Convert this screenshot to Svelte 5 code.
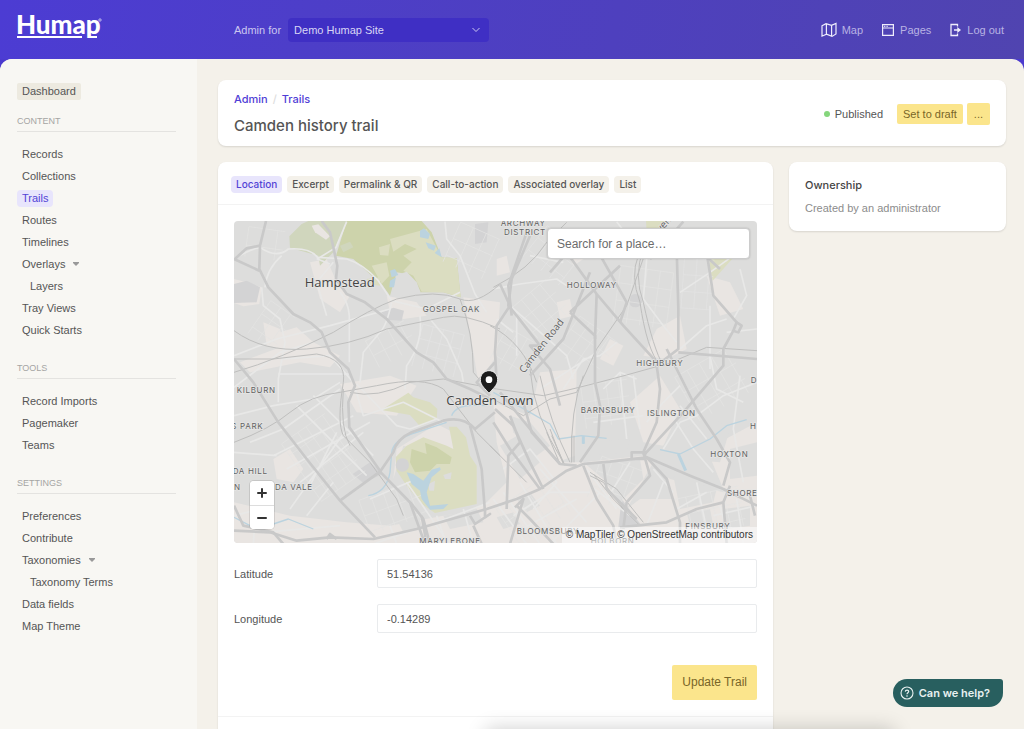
<script>
	const sections = [
		{
			title: 'Content',
			items: [
				{ label: 'Records' },
				{ label: 'Collections' },
				{ label: 'Trails', active: true },
				{ label: 'Routes' },
				{ label: 'Timelines' },
				{ label: 'Overlays', caret: true },
				{ label: 'Layers', child: true },
				{ label: 'Tray Views' },
				{ label: 'Quick Starts' }
			]
		},
		{
			title: 'Tools',
			items: [{ label: 'Record Imports' }, { label: 'Pagemaker' }, { label: 'Teams' }]
		},
		{
			title: 'Settings',
			items: [
				{ label: 'Preferences' },
				{ label: 'Contribute' },
				{ label: 'Taxonomies', caret: true },
				{ label: 'Taxonomy Terms', child: true },
				{ label: 'Data fields' },
				{ label: 'Map Theme' }
			]
		}
	];

	const tabs = ['Location', 'Excerpt', 'Permalink & QR', 'Call-to-action', 'Associated overlay', 'List'];

	let tab = $state('Location');
	let latitude = $state('51.54136');
	let longitude = $state('-0.14289');

	// Three map units to one CSS pixel at the default size
	const blocks = [
		'M12 190 50 200 95 215 88 265 40 272 12 262Z',
		'M150 350 200 335 250 380 330 420 300 455 210 440 60 470 30 440 150 395Z',
		'M240 140 290 130 320 200 360 240 330 290 270 250Z',
		'M240 30 275 15 300 60 270 90Z',
		'M100 320 150 340 165 400 110 390Z',
		'M470 240 560 260 590 300 520 310 480 290Z',
		'M700 245 810 260 800 420 745 500 720 350Z',
		'M330 505 480 480 560 510 500 600 380 590Z',
		'M130 730 180 700 220 760 190 800 140 790Z',
		'M12 860 180 900 350 920 480 930 640 900 760 880 780 985 12 985Z',
		'M500 700 620 625 670 650 690 780 560 700 520 690 490 790Z',
		'M1000 80 1060 60 1075 120 1030 150Z',
		'M1130 80 1190 60 1200 110 1150 130Z',
		'M980 260 1020 250 1030 300 990 310Z',
		'M800 130 830 120 840 170 800 180Z',
		'M1280 340 1350 300 1370 400 1310 430 1240 420Z',
		'M1430 180 1500 200 1540 280 1470 300Z',
		'M1200 560 1290 480 1350 580 1300 690 1240 680Z',
		'M930 470 1040 460 1035 720 980 740 900 600Z',
		'M1140 370 1180 390 1150 450 1110 430Z',
		'M790 560 900 600 1000 740 1060 740 1240 720 1320 790 1480 830 1581 800 1581 985 780 985 700 900 770 860 830 800 800 680Z',
		'M1430 700 1581 620 1581 830 1480 820Z'
	];

	const fabric = [
		'M810 690 880 650 930 740 870 790Z',
		'M840 600 900 620 960 690 920 720 850 650Z',
		'M1060 740 1230 730 1240 790 1170 860 1120 790Z',
		'M1270 740 1310 770 1330 850 1230 850 1190 880Z',
		'M1330 780 1460 820 1450 860 1350 880Z',
		'M1340 650 1440 600 1500 640 1470 740 1350 730 1290 700Z',
		'M1500 700 1581 680 1581 780 1500 790Z',
		'M1370 890 1440 880 1450 930 1380 930Z',
		'M1480 880 1560 870 1560 930 1490 940Z',
		'M1060 680 1200 670 1190 710 1070 720Z',
		'M860 850 900 830 930 870 890 890Z',
		'M500 910 560 890 580 940 520 950Z',
		'M640 900 740 880 760 920 660 940Z',
		'M800 905 850 890 870 925 820 940Z'
	];

	const darkBlocks = [
		'M368 775 420 740 458 775 400 802Z',
		'M455 290 490 276 522 285 515 315 470 312Z',
		'M12 205 50 195 90 215 80 260 12 262Z',
		'M735 25 775 20 770 80 735 85Z',
		'M1165 935 1175 850 1235 930Z'
	];

	const minor = [
		'M12 130 Q60 100 90 95 Q140 130 175 100 Q240 95 262 125 L350 130 Q400 145 445 195 L485 255 590 280 690 230',
		'M350 18 318 95 262 130 300 145',
		'M645 18 650 70 690 120 735 235 770 290',
		'M95 215 100 270 150 310 165 380 145 490 145 560',
		'M155 120 Q110 160 105 215',
		'M310 140 260 200 290 300 M330 230 Q355 260 358 300 V440',
		'M485 260 Q470 330 450 350 L400 410 390 500',
		'M570 300 Q580 380 530 450 L525 520 M600 310 650 370 695 470 700 500',
		'M12 420 140 370 300 330 480 280',
		'M12 515 150 410 250 380 M145 475 H360',
		'M160 430 300 420 370 500 400 600 520 560 640 620',
		'M12 600 130 570 250 550 330 500',
		'M60 680 160 640 330 520 M130 720 370 600 M170 760 420 620 M210 800 400 650 M12 710 140 720',
		'M200 570 410 780 M250 540 430 720 M240 810 320 650 M180 880 350 640 M230 900 310 800',
		'M380 505 500 630 540 640 620 610 M420 850 560 790',
		'M790 220 870 205 980 190 1010 210 M840 270 1010 420 1030 490',
		'M860 290 860 420 M800 310 850 350 M900 120 1000 140',
		'M1000 520 1060 430 1110 420 1160 380 M930 520 1100 410',
		'M1160 18 1200 70 1290 110 1350 110 M1250 130 1240 250 1300 330 1340 380',
		'M1350 230 1440 170 1510 120 1540 60 M1440 270 1440 460 M1530 160 1550 240 1510 310',
		'M1350 400 1430 330 1490 310 M1490 350 1581 340 M1440 420 1460 520 1540 560',
		'M1120 520 1170 470 1220 490 M1170 470 1190 670 M1210 480 1230 640 M1090 620 1240 600',
		'M1250 620 1300 560 1350 510 M1300 700 1350 620 1400 600 1480 540 1581 500',
		'M1320 590 1390 700 1450 770 M1350 570 1430 670 M1530 480 1510 640 1540 800',
		'M820 760 900 700 980 800 910 880 M850 900 960 830 1080 830 M930 760 1070 920 M960 985 1110 830',
		'M790 850 890 985 M820 830 930 985 M870 800 980 985 M840 960 1040 850',
		'M1130 850 1200 740 M1070 760 1160 880 M1080 810 1200 900 M1300 800 1250 930 M1270 760 1330 830',
		'M1340 880 1430 830 M1400 800 1430 940 M1470 870 1500 985 M1520 850 1540 985 M1450 900 1581 870',
		'M430 985 620 920 780 860 M480 930 500 985 M620 900 650 985 M700 880 730 985 M530 800 640 960',
		'M12 900 90 880 M80 830 70 985 M100 950 330 930'
	];

	// Regular terraces of side streets: origin, size, bearing and spacing
	const grids = [
		{ x: 200, y: 620, w: 160, h: 210, a: -35, s: 30 },
		{ x: 80, y: 270, w: 90, h: 120, a: 35, s: 36 },
		{ x: 420, y: 340, w: 130, h: 90, a: -28, s: 38 },
		{ x: 560, y: 340, w: 130, h: 130, a: 15, s: 32 },
		{ x: 900, y: 60, w: 140, h: 120, a: 38, s: 34 },
		{ x: 870, y: 220, w: 130, h: 120, a: -40, s: 36 },
		{ x: 1160, y: 160, w: 160, h: 170, a: 8, s: 40 },
		{ x: 1360, y: 80, w: 90, h: 200, a: 4, s: 38 },
		{ x: 1060, y: 500, w: 140, h: 130, a: -8, s: 38 },
		{ x: 1000, y: 330, w: 140, h: 130, a: 35, s: 36 },
		{ x: 1360, y: 430, w: 180, h: 150, a: -30, s: 42 },
		{ x: 1090, y: 740, w: 130, h: 130, a: 20, s: 34 },
		{ x: 820, y: 820, w: 180, h: 130, a: -34, s: 36 },
		{ x: 1340, y: 830, w: 200, h: 120, a: -12, s: 38 },
		{ x: 400, y: 820, w: 180, h: 110, a: -20, s: 38 },
		{ x: 800, y: 350, w: 90, h: 110, a: 30, s: 34 },
		{ x: 50, y: 40, w: 110, h: 90, a: 8, s: 44 },
		{ x: 660, y: 40, w: 130, h: 130, a: 24, s: 42 }
	];

	function gridPath({ w, h, s }) {
		let d = '';
		for (let i = 0; i <= w; i += s) d += `M${i} 0V${h}`;
		for (let j = 0; j <= h; j += s + 12) d += `M0 ${j}H${w}`;
		return d;
	}

	const major = [
		'M108 16 90 90 88 160 115 215 190 295 240 320 275 350 300 410 355 460 375 510 355 560 358 635 450 765',
		'M12 132 50 98 90 90 M12 130 88 165',
		'M275 16 300 50 322 150 318 190 350 235 405 260 470 310 560 410 610 440 650 490 720 520 780 550',
		'M12 430 70 500 145 620 230 730 330 855 435 965',
		'M330 855 450 768 490 710 Q500 670 545 650 L640 615 Q700 600 735 640 L795 590',
		'M450 768 545 865 580 910 600 985',
		'M540 860 585 985 M575 900 590 985',
		'M12 945 120 950 200 975 300 965 430 970 560 940 770 880 860 850 930 820 1010 765 1060 745 1140 738 1250 725 1380 780 1480 820 1581 870',
		'M290 970 300 955 320 970 M12 870 40 930 130 950 160 985',
		'M720 630 755 760 765 890 M765 880 V905 L780 895 735 925 720 900',
		'M730 930 755 985 M780 540 740 500 795 440',
		'M900 60 845 190 835 270 860 300 930 390 900 390 960 460 990 570',
		'M810 205 840 270 800 330 795 410 800 500',
		'M845 300 835 210 890 50',
		'M810 530 900 640 990 745 1040 750',
		'M795 580 850 630 900 740 940 820 M840 600 870 680 835 720 830 880',
		'M790 620 840 700 930 820 M880 560 905 650 990 745',
		'M900 480 1000 370 1080 170 M1020 290 1170 150',
		'M1010 110 1100 235 1180 330 1290 450',
		'M1310 400 1400 580 1460 670 1500 740 1480 810',
		'M1020 290 1095 360 1095 500 1110 570 1105 660 1050 740',
		'M1100 100 1190 260 1170 320',
		'M1100 235 1095 370',
		'M1340 100 1345 280 1345 400 1280 450 1290 520 1280 620 1240 710 1260 780 1190 860 1180 940',
		'M1430 110 1450 240 1520 320 1510 345 1480 400 1480 450 1360 590 1240 720',
		'M1520 320 1535 330 1525 350 1508 345',
		'M1345 410 1581 430',
		'M1060 750 1100 850 1150 930 1160 985 M1250 725 1310 790 1350 920 1350 985',
		'M1170 935 1310 920 1400 880 1480 860 1500 810 M1480 860 1490 985 M1560 840 1575 900',
		'M1120 745 1130 820 1220 910 M1205 710 H1245 V730 H1205Z',
		'M860 870 900 910 970 985 M855 875 880 850 840 985',
		'M1260 130 1360 18 M1360 60 1470 160 M980 120 960 50 M1030 90 960 170'
	];

	const rails = [
		'M12 345 Q100 410 230 400 T470 340 L640 305 Q700 290 810 340',
		'M12 470 Q150 430 310 350 Q420 280 500 250 Q620 220 690 250 Q740 270 810 205',
		'M12 430 130 430 260 415 Q350 430 340 500 Q320 620 340 660 L420 740 500 850 520 900',
		'M690 250 Q730 350 730 470 L780 530',
		'M12 680 Q120 640 180 590 T330 530 L440 510 Q580 480 640 520 L740 650 810 720',
		'M340 520 Q330 640 360 690 M360 530 Q440 550 540 500 L640 490 800 520 940 540 Q1080 510 1290 450',
		'M900 460 Q910 600 1000 740 M930 480 Q960 620 1020 740 M1060 480 Q1020 580 1025 740',
		'M780 545 880 600 960 550 1040 530 1100 400 1190 270 1250 100',
		'M1240 100 Q1210 180 1240 260 Q1270 400 1300 450 L1430 395 1581 405',
		'M1225 120 Q1200 180 1230 260 Q1250 400 1290 450',
		'M780 330 Q880 380 920 500 M790 215 Q900 160 950 80 L1010 20',
		'M780 690 830 740 890 800 M1080 770 1160 820 1240 920',
		'M950 650 990 745 M960 640 1000 745 M965 660 1005 750 M1025 660 V740 M1032 660 V740',
		'M1080 780 1120 800 1180 880 M1090 775 1150 850 1230 930'
	];

	const labels = [
		['ARCHWAY', 812, 31],
		['DISTRICT', 822, 59],
		['GOSPEL OAK', 578, 290],
		['HOLLOWAY', 1010, 217],
		['HIGHBURY', 1219, 451],
		['KILBURN', 20, 532],
		['BARNSBURY', 1052, 592],
		['ISLINGTON', 1251, 602],
		['S PARK', 4, 639],
		['HOXTON', 1441, 725],
		['DA HILL', 8, 776],
		['N', 12, 824],
		['DA VALE', 135, 824],
		['SHORE', 1491, 842],
		['FINSBURY', 1366, 940],
		['BLOOMSBURY', 860, 956],
		['MARYLEBONE', 568, 985],
		['HOLBORN', 1082, 985],
		['D', 1562, 502],
		['H', 1560, 639]
	];
</script>

<div class="app">
	<header class="topbar">
		<a class="brand" href="#home" aria-label="Humap">
			<svg width="92" height="28" viewBox="0 0 92 28">
				<text class="wordmark" x="-1" y="20">Humap</text>
				<path d="M0 22H65V24H0Z M73 22H80V24H72Z" fill="#fff" />
				<circle cx="83" cy="6" r="1.2" fill="none" stroke="#fff" stroke-width=".6" />
			</svg>
		</a>
		<div class="site">
			<label for="site">Admin for</label>
			<div class="select">
				<select id="site">
					<option>Demo Humap Site</option>
				</select>
				<svg class="chevron" width="8" height="6" viewBox="0 0 8 6">
					<path d="M.5 1 4 4.5 7.5 1" fill="none" stroke="currentColor" />
				</svg>
			</div>
		</div>
		<nav class="links" aria-label="Site">
			<a href="#map">
				<svg width="16" height="16" viewBox="0 0 16 16">
					<path
						d="M1 3.8 5 1.6 10.5 3.4 15 1.4V12L11 14.4 5.5 12.2 1 14.2Z M5.4 2V12 M10.6 3.6V14"
						fill="none"
						stroke="currentColor"
						stroke-width="1.2"
					/>
				</svg>
				Map
			</a>
			<a href="#pages">
				<svg width="14" height="14" viewBox="0 0 14 14">
					<path d="M1.6 1.6H12.4V12.4H1.6Z M1.6 5H12.4" fill="none" stroke="currentColor" stroke-width="1.2" />
					<path d="M3 3.3H7" stroke="currentColor" stroke-dasharray="1 .6" />
				</svg>
				Pages
			</a>
			<a href="#logout">
				<svg width="13" height="14" viewBox="0 0 13 14">
					<path d="M8.5 3.5V1.5H2V12.5H8.5V10.5" fill="none" stroke="currentColor" stroke-width="1.3" />
					<path d="M5 6.3H8.3V4L12 7 8.3 10V7.7H5Z" fill="currentColor" />
				</svg>
				Log out
			</a>
		</nav>
	</header>

	<div class="body">
		<aside class="sidebar">
			<a class="item dashboard" href="#dashboard">Dashboard</a>
			{#each sections as section (section.title)}
				<nav aria-label={section.title}>
					<h2>{section.title}</h2>
					<ul>
						{#each section.items as item (item.label)}
							<li class:child={item.child}>
								<a class="item" class:active={item.active} href="#{item.label}">{item.label}</a>
								{#if item.caret}
									<svg class="caret" width="6" height="4" viewBox="0 0 6 4">
										<path d="M0 0H6V1L3 4 0 1Z" fill="currentColor" />
									</svg>
								{/if}
							</li>
						{/each}
					</ul>
				</nav>
			{/each}
		</aside>

		<main>
			<section class="card heading">
				<div>
					<div class="crumbs">
						<a href="#admin">Admin</a><span>/</span><a href="#trails">Trails</a>
					</div>
					<h1>Camden history trail</h1>
				</div>
				<div class="actions">
					<span class="status">Published</span>
					<button class="yellow" type="button">Set to draft</button>
					<button class="yellow more" type="button" aria-label="More actions">...</button>
				</div>
			</section>

			<div class="columns">
				<section class="card editor">
					<div class="tabs">
						{#each tabs as name (name)}
							<button type="button" class:active={tab === name} onclick={() => (tab = name)}>{name}</button>
						{/each}
					</div>

					<form onsubmit={(e) => e.preventDefault()}>
						<div class="map">
							<svg class="tiles" viewBox="12 16 1569 966" preserveAspectRatio="xMidYMid slice" role="img" aria-label="Map of Camden">
								<rect class="land" x="0" y="0" width="1600" height="1000" />
								{#each blocks as d (d)}<path class="block" {d} />{/each}
								{#each fabric as d (d)}<path class="land" {d} />{/each}
								{#each darkBlocks as d (d)}<path class="dark-block" {d} />{/each}
								<circle class="dark-block" cx="1216" cy="255" r="20" />

								<path class="wood" d="M215 25 235 16H350L310 110 295 125 270 150 265 120 180 96 178 62Z" />
								<path class="block" d="M245 30 265 26 300 62 288 72 255 50Z" />
								<path class="heath" d="M350 16H575L605 50 635 125 680 128 692 245 640 230 570 230 530 175 500 170 480 240 455 205 430 185 370 130 318 120Z" />
								<path class="park" d="M480 70 590 40 635 125 680 128 692 245 640 230 575 228 550 180 520 165 545 140 520 120 560 100 525 85 490 108Z" />
								<path class="park" d="M447 95 480 85 475 120 450 118Z M425 150 470 140 478 180 455 205Z M410 190 450 185 450 210 415 205Z" />
								<path class="land" d="M485 240 500 178 530 168 560 200 572 230 520 238Z" />
								<path class="wood" d="M330 90 360 78 370 95 340 110Z" />
								<path class="park" d="M454 583 535 531 550 545 600 560 622 580 620 610 570 632 540 598Z" />
								<path class="park" d="M497 725 530 690 580 665 650 690 670 700 657 633H680L708 665 720 720 740 750V865L615 892 575 865 530 810 500 765Z" />
								<path class="heath" d="M585 681 620 695 665 725 660 745 620 745 600 765 555 770 540 740 545 700 590 715Z" />
								<circle class="dark-block" cx="517" cy="748" r="20" />
								<path class="park" d="M1248 16H1310L1290 50H1250Z M1432 120H1515L1448 195Z" />
								<path class="land" d="M640 778 665 770 662 790 645 790Z M595 805 615 795 612 825 598 825Z" />

								{#each grids as g (`${g.x}-${g.y}`)}
									<path class="street" d={gridPath(g)} transform="translate({g.x} {g.y}) rotate({g.a} {g.w / 2} {g.h / 2})" />
								{/each}
								{#each minor as d (d)}<path class="minor" {d} />{/each}

								<path class="water" d="M570 45 582 38 600 55 595 70 570 65Z M587 80 618 90 612 105 595 98Z M614 112 628 98 635 125Z M480 165 495 160 505 178 485 185Z M480 195 498 185 492 215 478 215Z" />
								<path class="water" d="M530 770 550 775 580 795 605 762 630 755 632 762 605 785 590 830 600 870 655 865 640 880 600 882 575 850 570 825 545 805Z" />
								<path class="canal" d="M12 905 60 930 130 925 175 910 250 940 M415 840Q470 830 480 770 L485 710Q490 670 560 650L650 620" />
								<path class="canal" d="M665 600Q680 560 770 570 M790 530 900 590 960 625 985 670 1055 660 1130 668 M1060 660V685 M1290 702 1350 715 1440 670 1490 630 1550 612" />
								<path class="basin" d="M1345 715 1367 765 M1060 662V684" />

								{#each rails as d (d)}<path class="rail" {d} />{/each}
								{#each major as d (d)}<path class="major" {d} />{/each}

								{#each labels as [name, x, y] (name)}
									<text class="district" {x} {y}>{name}</text>
								{/each}
								<text class="town" x="224" y="215">Hampstead</text>
								<text class="town" x="649" y="567">Camden Town</text>
								<text class="road" transform="translate(882 474) rotate(-52)">Camden Road</text>
								<text class="road" transform="translate(1270 76) rotate(-48)">Seven</text>

								<path class="pin" d="M777 465C791 465 803 476 803 492C803 510 787 520 777 533C767 520 751 510 751 492C751 476 763 465 777 465Z" />
								<circle cx="777" cy="492" r="10" fill="#fff" />
							</svg>
							<input class="search" type="search" placeholder="Search for a place…" aria-label="Search for a place" />
							<div class="zoom">
								<button type="button" aria-label="Zoom in">
									<svg width="10" height="10" viewBox="0 0 10 10">
										<path d="M5 1V9M1 5H9" stroke="#333" stroke-width="2" stroke-linecap="round" />
									</svg>
								</button>
								<button type="button" aria-label="Zoom out">
									<svg width="10" height="10" viewBox="0 0 10 10">
										<path d="M1 5H9" stroke="#333" stroke-width="2" stroke-linecap="round" />
									</svg>
								</button>
							</div>
							<div class="attribution">
								<a href="#maptiler">© MapTiler</a> <a href="#osm">© OpenStreetMap contributors</a>
							</div>
						</div>

						<div class="field">
							<label for="lat">Latitude</label>
							<input id="lat" type="text" bind:value={latitude} />
						</div>
						<div class="field">
							<label for="lng">Longitude</label>
							<input id="lng" type="text" bind:value={longitude} />
						</div>
						<button class="yellow update" type="submit">Update Trail</button>
					</form>
				</section>

				<section class="card owner">
					<h3>Ownership</h3>
					<p>Created by an administrator</p>
				</section>
			</div>
		</main>
	</div>

	<div class="tray"></div>
	<button class="help" type="button">
		<svg width="14" height="14" viewBox="0 0 14 14">
			<circle cx="7" cy="7" r="6" fill="none" stroke="currentColor" stroke-width="1.1" />
			<path d="M5.3 5.6C5.4 3.5 8.7 3.6 8.7 5.5C8.7 6.7 7 6.8 7 8.2" fill="none" stroke="currentColor" stroke-width="1.2" />
			<circle cx="7" cy="10" r=".8" fill="currentColor" />
		</svg>
		Can we help?
	</button>
</div>

<style>
	:global(body) {
		margin: 0;
		background: #4b3ace;
	}

	.app {
		display: flex;
		flex-direction: column;
		height: 100vh;
		overflow: hidden;
		font-family: 'Liberation Sans', Arial, sans-serif;
		font-size: 11px;
		line-height: 16px;
		color: #555;
	}

	.app * {
		box-sizing: border-box;
	}

	a {
		color: inherit;
		text-decoration: none;
	}

	button,
	input,
	select {
		font: inherit;
		color: inherit;
		margin: 0;
	}

	button {
		border: 0;
		cursor: pointer;
	}

	svg {
		flex: none;
	}

	.topbar {
		display: flex;
		align-items: center;
		flex: none;
		height: 59px;
		padding: 0 20px 0 17px;
		background: linear-gradient(100deg, #4c3cd3, #4e40be 60%, #5044b0);
		color: #cbc6f0;
	}

	.brand {
		width: 217px;
		height: 28px;
		margin-top: -3px;
	}

	.wordmark {
		font-family: Lato, sans-serif;
		font-size: 26px;
		font-weight: 900;
		fill: #fff;
	}

	.site {
		display: flex;
		align-items: center;
		gap: 7px;
	}

	.select {
		position: relative;
		width: 201px;
	}

	.select select {
		display: block;
		width: 100%;
		height: 24px;
		padding: 0 24px 0 6px;
		border: 0;
		border-radius: 4px;
		appearance: none;
		background: #3f2fc4;
		color: #d9d6f5;
	}

	.chevron {
		position: absolute;
		right: 9px;
		top: 9px;
	}

	.links {
		display: flex;
		gap: 18px;
		margin-left: auto;
		color: #b9b3e4;
	}

	.links a {
		display: flex;
		align-items: center;
		gap: 5px;
	}

	.links svg {
		color: #efedfc;
	}

	.body {
		display: flex;
		flex: 1;
		min-height: 0;
		border-radius: 12px 12px 0 0;
		overflow: hidden;
		background: #f4f1ea;
	}

	.sidebar {
		flex: none;
		width: 197px;
		padding: 24px 21px 0 17px;
		background: #f8f7f3;
	}

	.item {
		display: inline-block;
		padding: 0 5px;
		border-radius: 4px;
		line-height: 17px;
	}

	.dashboard {
		background: #edeae0;
		border-radius: 2px;
	}

	.sidebar nav {
		margin-top: 13px;
	}

	.sidebar nav + nav {
		margin-top: 19px;
	}

	h2 {
		margin: 0 0 11px;
		padding-bottom: 2px;
		border-bottom: 1px solid #e4e3e0;
		font-size: 9px;
		font-weight: 400;
		text-transform: uppercase;
		color: #a5a5a3;
	}

	ul {
		margin: 0;
		padding: 0;
		list-style: none;
	}

	li {
		display: flex;
		align-items: center;
		height: 22px;
	}

	.child {
		padding-left: 8px;
	}

	.active {
		background: #e8e5fc;
		color: #5343d6;
	}

	.caret {
		margin-left: 3px;
		color: #999;
	}

	main {
		flex: 1;
		min-width: 0;
		padding: 21px 18px 0 21px;
	}

	.card {
		border-radius: 8px;
		background: #fff;
		box-shadow: 0 1px 2px rgba(0, 0, 0, 0.12);
	}

	.heading {
		display: flex;
		align-items: center;
		justify-content: space-between;
		padding: 11px 16px 10px;
	}

	.crumbs,
	h1,
	h3,
	.tabs,
	.help {
		font-family: Inter, sans-serif;
	}

	.crumbs {
		display: flex;
		gap: 5px;
		font-weight: 500;
		color: #ddd;
	}

	.crumbs a {
		color: #4f3ed6;
	}

	h1 {
		margin: 9px 0 0;
		font-size: 15px;
		font-weight: 500;
		line-height: 20px;
	}

	.actions {
		display: flex;
		align-items: center;
		gap: 4px;
	}

	.status {
		display: flex;
		align-items: center;
		gap: 5px;
		margin-right: 10px;
	}

	.status::before {
		content: '';
		width: 6px;
		height: 6px;
		border-radius: 50%;
		background: #85d67c;
	}

	.yellow {
		padding: 2px 6px;
		border-radius: 2px;
		background: #fbe58c;
		color: #796628;
	}

	.more {
		padding: 3px 7px;
	}

	.columns {
		display: grid;
		grid-template-columns: minmax(0, 1fr) 217px;
		align-items: start;
		gap: 16px;
		margin-top: 16px;
	}

	.editor {
		min-height: 640px;
	}

	.tabs {
		display: flex;
		gap: 5px;
		padding: 14px 13px 11px;
		border-bottom: 1px solid #f3f3f3;
	}

	.tabs button {
		padding: 0 5px;
		border-radius: 4px;
		background: #f4f1ea;
		font-size: 10px;
		font-weight: 500;
		line-height: 17px;
		white-space: nowrap;
	}

	.tabs button.active {
		background: #e8e5fc;
	}

	form {
		display: flex;
		flex-direction: column;
		gap: 16px;
		padding: 16px;
		border-bottom: 1px solid #f3f3f3;
	}

	.map {
		position: relative;
		height: 322px;
		border-radius: 4px;
		overflow: hidden;
	}

	.tiles {
		display: block;
		width: 100%;
		height: 100%;
	}

	.tiles path {
		fill: none;
		stroke-linejoin: round;
	}

	.tiles .land {
		fill: #dddddc;
	}

	.tiles .block {
		fill: #e9e5e2;
	}

	.tiles .dark-block {
		fill: #d3d3d4;
	}

	.tiles .wood {
		fill: #d0d6bd;
	}

	.tiles .heath {
		fill: #cdd3ab;
	}

	.tiles .park {
		fill: #dbddc1;
	}

	.tiles .water {
		fill: #bbd3df;
	}

	.tiles .canal {
		stroke: #bbd3df;
		stroke-width: 4;
	}

	.tiles .basin {
		stroke: #bbd3df;
		stroke-width: 9;
	}

	.tiles .street {
		stroke: #e4e4e3;
		stroke-width: 2;
	}

	.tiles .minor {
		stroke: #e8e8e7;
		stroke-width: 5;
	}

	.tiles .rail {
		stroke: #bfbfbe;
		stroke-width: 3;
	}

	.tiles .major {
		stroke: #c9c9c9;
		stroke-width: 8;
	}

	.tiles text {
		font-family: 'Open Sans', sans-serif;
		stroke: #e6e6e5;
		stroke-width: 4;
		paint-order: stroke;
	}

	.tiles .district {
		font-family: Inter, sans-serif;
		font-size: 24px;
		letter-spacing: 2px;
		fill: #626262;
	}

	.town {
		font-size: 39px;
		fill: #444;
	}

	.road {
		font-size: 30px;
		fill: #606060;
	}

	.tiles .pin {
		fill: #1c1c1c;
		stroke: #eee;
		stroke-width: 3;
	}

	.search {
		position: absolute;
		top: 7px;
		right: 7px;
		width: 203px;
		height: 31px;
		padding: 0 9px;
		border: 1px solid #ccc;
		border-radius: 4px;
		background: #fff;
		font-size: 12px;
		box-shadow: 0 0 2px rgba(0, 0, 0, 0.2);
	}

	.search::placeholder {
		color: #6c6c6c;
	}

	.zoom {
		position: absolute;
		left: 16px;
		bottom: 14px;
		width: 24px;
		border-radius: 4px;
		overflow: hidden;
		background: #fff;
		box-shadow: 0 0 0 1px rgba(0, 0, 0, 0.1);
	}

	.zoom button {
		display: grid;
		place-items: center;
		width: 24px;
		height: 24px;
		padding: 0;
		background: #fff;
	}

	.zoom button + button {
		border-top: 1px solid #ddd;
	}

	.attribution {
		position: absolute;
		right: 0;
		bottom: 0;
		padding: 0 4px;
		background: rgba(255, 255, 255, 0.5);
		font-size: 10px;
		color: #333;
	}

	.field {
		display: grid;
		grid-template-columns: 127px minmax(0, 1fr);
		align-items: center;
		gap: 16px;
	}

	.field input {
		width: 100%;
		height: 29px;
		padding: 0 9px;
		border: 1px solid #e9ebed;
		border-radius: 2px;
		background: #fff;
	}

	.update {
		align-self: flex-end;
		margin-top: 16px;
		padding: 0 10px;
		font-size: 12px;
		line-height: 35px;
	}

	.owner {
		padding: 15px 16px;
	}

	h3 {
		margin: 0 0 7px;
		font-size: 11px;
		font-weight: 500;
		color: #444;
	}

	p {
		margin: 0;
		color: #8c8c8c;
	}

	.tray {
		position: fixed;
		left: 50%;
		bottom: -20px;
		width: 400px;
		height: 16px;
		margin-left: -22px;
		box-shadow: 0 0 20px 4px rgba(0, 0, 0, 0.2);
	}

	.help {
		position: fixed;
		right: 21px;
		bottom: 22px;
		display: flex;
		align-items: center;
		gap: 5px;
		height: 28px;
		padding: 0 13px 0 7px;
		border-radius: 14px 3px 14px 14px;
		background: #285f5f;
		font-weight: 600;
		color: #e8f1f1;
	}
</style>
